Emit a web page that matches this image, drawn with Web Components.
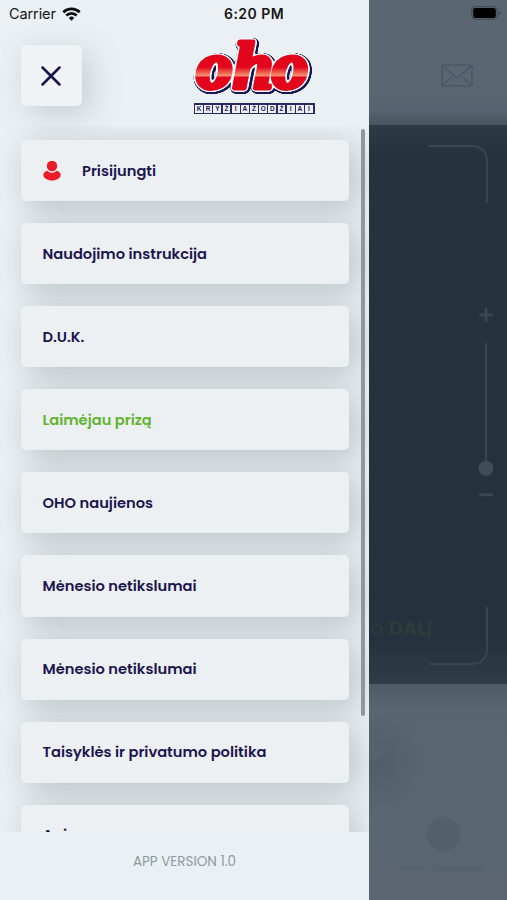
<!DOCTYPE html>
<html lang="lt">
<head>
<meta charset="UTF-8">
<meta name="viewport" content="width=device-width, initial-scale=1">
<title>OHO kryžiažodžiai</title>
<style>
  body {
    margin: 0;
    background: #25323e;
    font-family: Poppins, Inter, "Open Sans", sans-serif;
  }
</style>
</head>
<body>
<app-screen>
  <status-bar slot="status" carrier="Carrier" time="6:20 PM"></status-bar>
  <side-drawer slot="drawer" version="APP VERSION 1.0">
    <oho-logo slot="logo"></oho-logo>
    <menu-item icon>Prisijungti</menu-item>
    <menu-item>Naudojimo instrukcija</menu-item>
    <menu-item>D.U.K.</menu-item>
    <menu-item highlight>Laimėjau prizą</menu-item>
    <menu-item>OHO naujienos</menu-item>
    <menu-item>Mėnesio netikslumai</menu-item>
    <menu-item>Mėnesio netikslumai</menu-item>
    <menu-item>Taisyklės ir privatumo politika</menu-item>
    <menu-item>Apie mus</menu-item>
  </side-drawer>
  <scan-page></scan-page>
</app-screen>

<script>
class BaseElement extends HTMLElement {
  constructor() {
    super();
    const template = document.createElement("template");
    template.innerHTML = this.render();
    this.attachShadow({ mode: "open" }).appendChild(template.content.cloneNode(true));
  }
}

class AppScreen extends BaseElement {
  render() {
    return `
      <style>
        :host {
          position: relative;
          display: flex;
          width: 507px;
          height: 900px;
          overflow: hidden;
        }
        .status { position: absolute; inset: 0 0 auto 0; z-index: 2; }
        ::slotted(side-drawer) { flex: 0 0 369px; }
      </style>
      <div class="status"><slot name="status"></slot></div>
      <slot name="drawer"></slot>
      <slot></slot>
    `;
  }
}

class StatusBar extends BaseElement {
  render() {
    return `
      <style>
        :host {
          display: grid;
          grid-template-columns: 1fr auto 1fr;
          align-items: center;
          height: 28px;
          padding: 0 6px 0 9px;
          box-sizing: border-box;
          color: #151719;
          font: 14.5px/28px Inter, sans-serif;
        }
        .left { display: flex; align-items: center; gap: 6px; }
        .left span { letter-spacing: -0.1px; }
        .time { font-weight: 600; font-size: 14px; letter-spacing: 0.45px; margin-right: 2px; }
        .battery { justify-self: end; margin-top: -2px; }
        svg { display: block; }
      </style>
      <div class="left">
        <span>${this.getAttribute("carrier")}</span>
        <svg width="19" height="14" viewBox="0 0 19 14" fill="none" stroke="#0b0d0f" stroke-width="2.7">
          <path d="M1.300 5.200a11.700 11.700 0 0 1 16.400 0"/>
          <path d="M4.300 8.500a7.400 7.400 0 0 1 10.400 0"/>
          <path d="M9.500 13.700 6.800 10.900a3.900 3.900 0 0 1 5.400 0Z" fill="#0b0d0f" stroke="none"/>
        </svg>
      </div>
      <div class="time">${this.getAttribute("time")}</div>
      <svg class="battery" width="30" height="14" viewBox="0 0 30 14">
        <rect x="0.7" y="0.7" width="25.6" height="12.6" rx="4" fill="none" stroke="#434b53" stroke-width="1.2"/>
        <rect x="2.2" y="2.1" width="22.6" height="9.8" rx="2.2" fill="#000"/>
        <path d="M27.800 5v4c1-.3 1.600-1 1.600-2s-.6-1.700-1.600-2Z" fill="#3e464d"/>
      </svg>
    `;
  }
}

class OhoLogo extends BaseElement {
  render() {
    const cells = [..."KRYŽIAŽODŽIAI"].map((letter) => `<span>${letter}</span>`).join("");
    return `
      <style>
        :host { display: flex; flex-direction: column; align-items: center; width: 124px; gap: 5px; }
        svg { display: block; }
        .cells {
          display: grid;
          grid-template-columns: repeat(13, 1fr);
          gap: 1.2px;
          width: 121px;
          height: 11px;
          padding: 1.5px;
          box-sizing: border-box;
          background: #2c2a66;
        }
        .cells span {
          background: #eef0f8;
          color: #1c1a58;
          font: bold 6.5px/8px "Liberation Sans", sans-serif;
          text-align: center;
        }
      </style>
      <svg width="124" height="62" viewBox="0 0 124 62" overflow="visible">
        <defs>
          <linearGradient id="shine" gradientUnits="userSpaceOnUse" x1="0" y1="4" x2="0" y2="58">
            <stop offset="0.5" stop-color="#e3051b"/>
            <stop offset="0.66" stop-color="#f5916c"/>
            <stop offset="0.69" stop-color="#e3051b"/>
          </linearGradient>
          <!-- white rim, then a navy rim shifted to the lower right -->
          <filter id="rims" filterUnits="userSpaceOnUse" x="-8" y="-8" width="140" height="78" color-interpolation-filters="sRGB">
            <feGaussianBlur in="SourceAlpha" stdDeviation="1.3"/>
            <feComponentTransfer result="wide"><feFuncA type="linear" slope="10" intercept="-0.8"/></feComponentTransfer>
            <feFlood flood-color="#fff"/>
            <feComposite in2="wide" operator="in" result="white"/>
            <feGaussianBlur in="wide" stdDeviation="1.1"/>
            <feComponentTransfer><feFuncA type="linear" slope="8" intercept="-0.8"/></feComponentTransfer>
            <feOffset dx="1.1" dy="0.7" result="wider"/>
            <feFlood flood-color="#1b1756"/>
            <feComposite in2="wider" operator="in" result="navy"/>
            <feMerge>
              <feMergeNode in="navy"/>
              <feMergeNode in="white"/>
              <feMergeNode in="SourceGraphic"/>
            </feMerge>
          </filter>
        </defs>
        <text x="4.3 37.5 73" y="51.5" transform="scale(1.1 1)" filter="url(#rims)" font-family="Liberation Serif"
          font-weight="bold" font-style="italic" font-size="65" stroke-linejoin="round"
          fill="url(#shine)" stroke="url(#shine)" stroke-width="4.8">oho</text>
      </svg>
      <div class="cells">${cells}</div>
    `;
  }
}

class MenuItem extends BaseElement {
  render() {
    const icon = `
      <svg width="18" height="20" viewBox="0 0 18 20" fill="#ed1c2b">
        <circle cx="9" cy="5" r="5.2"/>
        <path d="M4.600 9.800C2 10.300 .3 12 .3 14 .3 17 4.500 19.500 9 19.500s8.700-2.500 8.700-5.500c0-2-1.700-3.700-4.300-4.200C12.200 11.200 10.600 11.800 9 11.800s-3.200-.6-4.400-2Z"/>
      </svg>`;
    return `
      <style>
        :host {
          display: flex;
          flex: none;
          align-items: center;
          gap: 21.5px;
          height: 61.1px;
          padding: 1px 22px 0 21.5px;
          box-sizing: border-box;
          border-radius: 5px;
          background: #ecf0f3;
          box-shadow: 9px 9px 30px rgba(120, 136, 136, 0.3), 2px 2px 28px rgba(120, 136, 136, 0.15);
          color: #1d154f;
          font-size: 14.66px;
          font-weight: 600;
          white-space: nowrap;
        }
        :host([highlight]) { color: #62b32c; }
      </style>
      ${this.hasAttribute("icon") ? icon : ""}
      <slot></slot>
    `;
  }
}

class SideDrawer extends BaseElement {
  render() {
    return `
      <style>
        :host {
          display: flex;
          flex-direction: column;
          height: 900px;
          overflow: hidden;
          background: #ebf0f4;
        }
        header {
          display: flex;
          justify-content: space-between;
          align-items: flex-start;
          height: 126px;
          padding: 36px 53px 0 21px;
          box-sizing: border-box;
        }
        button {
          display: grid;
          place-items: center;
          width: 61px;
          height: 61px;
          margin-top: 9px;
          padding: 0;
          border: 0;
          border-radius: 5px;
          background: #eff3f6;
          box-shadow: 9px 10px 30px rgba(120, 134, 136, 0.25), 0 0 24px rgba(120, 134, 136, 0.08);
        }
        button svg { margin-right: 2px; }
        .body { display: flex; height: 706px; overflow: hidden; }
        .list {
          display: flex;
          flex-direction: column;
          gap: 22px;
          flex: 0 0 328px;
          padding: 14px 12px 0 21px;
        }
        .scrollbar {
          width: 4px;
          height: 587px;
          margin-top: 3px;
          border-radius: 2px;
          background: #8f989d;
          z-index: 1;
        }
        footer {
          display: grid;
          place-items: center;
          height: 68px;
          padding-bottom: 8px;
          box-sizing: border-box;
          color: #8f9b9e;
          font-size: 13.5px;
        }
      </style>
      <header>
        <button aria-label="Uždaryti">
          <svg width="22" height="22" viewBox="0 0 22 22" stroke="#1a114d" stroke-width="2.5" stroke-linecap="round">
            <path d="M2.500 2.500l17 17M19.500 2.500l-17 17"/>
          </svg>
        </button>
        <slot name="logo"></slot>
      </header>
      <div class="body">
        <div class="list"><slot></slot></div>
        <div class="scrollbar"></div>
      </div>
      <footer>${this.getAttribute("version")}</footer>
    `;
  }
}

/* Camera page, dimmed behind the open drawer */
class ScanPage extends BaseElement {
  render() {
    return `
      <style>
        :host { display: flex; flex-direction: column; flex: 1; min-width: 0; height: 900px; background: #5a6672; }
        header {
          display: flex;
          justify-content: flex-end;
          height: 125px;
          padding: 64px 34px 0 0;
          box-sizing: border-box;
          background: linear-gradient(#5a6773 75%, #566370 88%, #495661);
        }
        .camera {
          display: flex;
          flex-direction: column;
          align-items: flex-end;
          height: 559px;
          padding: 20px 19.5px 19px 0;
          box-sizing: border-box;
          background: linear-gradient(#2e3b47, #26333e 5%, #25323d 92%, #303d48);
        }
        .corner {
          width: 59px;
          height: 58px;
          box-sizing: border-box;
          border: solid #394651;
          border-width: 2px 2px 0 0;
          border-radius: 0 15px 0 0;
        }
        .corner.bottom { flex: none; border-width: 0 2px 2px 0; border-radius: 0 0 15px 0; }
        .zoom { margin: 103px -6px 0 0; }
        .label-row {
          display: flex;
          align-items: flex-start;
          justify-content: space-between;
          align-self: stretch;
          margin-top: 106px;
        }
        .label {
          flex: none;
          margin: 10px -10px 0 2px;
          color: #2a3d3c;
          font-size: 19.5px;
          line-height: 24px;
          white-space: nowrap;
        }
        .label b { font-weight: 700; }
        .bottom-area { flex: 1; overflow: hidden; background: linear-gradient(#4e5b66, #596672 12%, #5b6671); }
        svg { display: block; }
      </style>
      <header>
        <svg width="32" height="23" viewBox="0 0 32 23" fill="none" stroke="#4c5868" stroke-width="1.7" stroke-linejoin="round">
          <rect x="1" y="1" width="30" height="21" rx="1.5"/>
          <path d="M2 2l12.300 10.800q1.700 1.300 3.400 0L30 2M2 21l8.500-8M30 21l-8.500-8"/>
        </svg>
      </header>
      <div class="camera">
        <div class="corner"></div>
        <svg class="zoom" width="16" height="196" viewBox="0 0 16 196" stroke="#3a4651" fill="#404c58">
          <path d="M8 2v14M1 9h14" stroke-width="2.7"/>
          <path d="M8 37v120" stroke-width="2"/>
          <circle cx="8" cy="163" r="7.5" stroke="none"/>
          <path d="M1 189.500h14" stroke-width="3"/>
        </svg>
        <div class="label-row">
          <div class="label">o <b>DALĮ</b></div>
          <div class="corner bottom"></div>
        </div>
      </div>
      <div class="bottom-area">
        <svg width="138" height="216" viewBox="0 0 138 216">
          <defs>
            <radialGradient id="glow">
              <stop offset="0.2" stop-color="#50606a"/>
              <stop offset="1" stop-color="#50606a" stop-opacity="0"/>
            </radialGradient>
            <filter id="soft"><feGaussianBlur stdDeviation="1.2"/></filter>
          </defs>
          <circle cx="4" cy="78" r="52" fill="url(#glow)"/>
          <circle cx="5" cy="69" r="7" fill="#55646e" filter="url(#soft)"/>
          <circle cx="74.5" cy="150" r="17" fill="#51606a" filter="url(#soft)"/>
          <g fill="#56636e" filter="url(#soft)">
            <rect x="33" y="182" width="24" height="3"/>
            <rect x="62" y="181" width="54" height="7" rx="2"/>
          </g>
        </svg>
      </div>
    `;
  }
}

customElements.define("app-screen", AppScreen);
customElements.define("status-bar", StatusBar);
customElements.define("oho-logo", OhoLogo);
customElements.define("menu-item", MenuItem);
customElements.define("side-drawer", SideDrawer);
customElements.define("scan-page", ScanPage);
</script>
</body>
</html>
